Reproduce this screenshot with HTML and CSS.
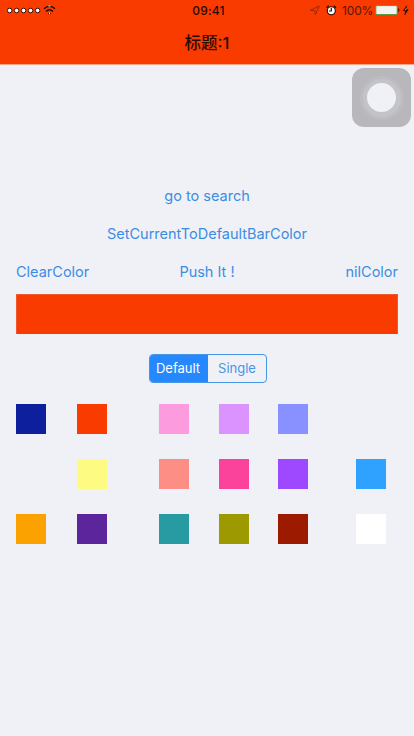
FILE: index.html
```html
<!DOCTYPE html>
<html lang="zh-CN">
<head>
<meta charset="utf-8">
<title>标题:1</title>
<link rel="stylesheet" href="styles.css">
</head>
<body>
<header class="navbar">
  <div class="status">
    <div class="status-left">
      <svg class="signal" width="50" height="14" viewBox="0 0 50 14">
        <g fill="#fff" stroke="#321006" stroke-width="1">
          <circle cx="3.6" cy="7.5" r="2.3"/><circle cx="10.6" cy="7.5" r="2.3"/><circle cx="17.6" cy="7.5" r="2.3"/><circle cx="24.6" cy="7.5" r="2.3"/><circle cx="31.6" cy="7.5" r="2.3"/>
        </g>
        <g fill="none" stroke="#210a04" stroke-width="1.4">
          <path d="M38 5.8Q43.5 .7 49 5.8"/><path d="M40 8.6Q43.5 5 47 8.6"/>
        </g>
        <path d="M41.8 10.2Q43.5 8.8 45.2 10.2L43.5 12Z" fill="#210a04"/>
        <path d="M42.5 3h2M43.5 9.5v1.8" stroke="#fff" stroke-width="1"/>
      </svg>
    </div>
    <time class="clock">09:41</time>
    <div class="status-right">
      <svg width="12" height="14" viewBox="0 0 12 14"><path d="M1.4 7.3L10.2 3L6.3 11.7L5.8 7.6Z" fill="none" stroke="#9c2908" stroke-width="1"/></svg>
      <svg class="alarm" width="12" height="14" viewBox="0 0 12 14"><circle cx="6.3" cy="7.8" r="4" fill="#fff" stroke="#210a04" stroke-width="1.1"/><path d="M1.6 4.8L3.7 2.8M8.9 2.8L11 4.8M6.3 5v3H4" fill="none" stroke="#210a04" stroke-width="1.2"/></svg>
      <span class="percent">100%</span>
      <svg width="36" height="14" viewBox="0 0 36 14"><rect x=".8" y="2.6" width="21.4" height="9" rx="1.4" fill="#f5f2f4" stroke="#4c9b38"/><path d="M23.4 5.6q1.5 1.5 0 3z" fill="#38160b" stroke="#38160b" stroke-width=".6"/><path d="M31.7 2.7L28.2 7.8H30.5L29.7 12L33.3 6.5H31Z" fill="#210a04" stroke="#210a04" stroke-width=".4"/><path d="M31 5.5L30.5 7.2" stroke="#fff" stroke-width=".7"/></svg>
    </div>
  </div>
  <h1 class="title">标题:1</h1>
</header>
<main class="content">
  <div class="links">
    <a class="link search">go to search</a>
    <a class="link set-default">SetCurrentToDefaultBarColor</a>
    <div class="link-row">
      <a class="link clear">ClearColor</a>
      <a class="link push">Push It !</a>
      <a class="link nil">nilColor</a>
    </div>
  </div>
  <div class="preview"></div>
  <div class="segments">
    <div class="segment selected">Default</div>
    <div class="segment">Single</div>
  </div>
  <div class="palette">
    <i class="swatch navy"></i><i class="swatch red"></i><i class="swatch pink"></i><i class="swatch lilac"></i><i class="swatch periwinkle"></i><i class="swatch clear-swatch"></i>
    <i class="swatch clear-swatch"></i><i class="swatch yellow"></i><i class="swatch salmon"></i><i class="swatch magenta"></i><i class="swatch violet"></i><i class="swatch blue"></i>
    <i class="swatch orange"></i><i class="swatch purple"></i><i class="swatch teal"></i><i class="swatch olive"></i><i class="swatch brick"></i><i class="swatch white"></i>
  </div>
</main>
<div class="assistive"><div class="ring"><div class="knob"></div></div></div>
</body>
</html>
```

FILE: styles.css
```css
* { box-sizing: border-box; }
body {
  margin: 0;
  width: 414px;
  height: 736px;
  overflow: hidden;
  background: #f0f1f7;
  font-family: Inter, "Noto Sans CJK SC", sans-serif;
}
.navbar {
  height: 65px;
  background: #fa3b00;
  border-bottom: 1px solid #f9a58c;
  color: #260c04;
}
.status {
  display: grid;
  grid-template-columns: 1fr auto 1fr;
  height: 22px;
  padding: 3px 3px 0 6px;
}
.status svg { display: block; flex: none; }
.clock {
  font-size: 12px;
  line-height: 16px;
  font-weight: 500;
  letter-spacing: .2px;
}
.status-right { display: flex; justify-content: flex-end; }
.alarm { margin-left: 4px; }
.percent {
  width: 31px;
  margin: 0 2px 0 5px;
  font-size: 12px;
  line-height: 16px;
  letter-spacing: -.15px;
  color: #571706;
}
.title {
  margin: 0;
  font-size: 16.5px;
  line-height: 43px;
  font-weight: 500;
  text-align: center;
}
.content { padding: 120px 16px 0; }
.links { display: flex; flex-direction: column; align-items: center; gap: 16px; }
.link {
  font-size: 14.5px;
  line-height: 21px;
  height: 22px;
  color: #3b8de3;
  white-space: nowrap;
}
.link-row {
  display: grid;
  grid-template-columns: 1fr auto 1fr;
  align-self: stretch;
}
.nil { text-align: right; }
.preview {
  height: 40px;
  margin-top: 11px;
  background: #fa3b00;
  border: 1px solid #ee5931;
  border-bottom: 0;
}
.segments {
  display: grid;
  grid-template-columns: 1fr 1fr;
  width: 118px;
  height: 29px;
  margin: 20px auto 0 133px;
  border: 1px solid #4795e5;
  border-radius: 4px;
  overflow: hidden;
}
.segment {
  font-size: 13px;
  line-height: 27px;
  text-align: center;
  color: #4795e5;
}
.selected { background: #2688fe; color: #fff; padding-right: 2px; }
.palette {
  display: grid;
  grid-template-columns: 61px 82px 60px 59px 78px 30px;
  row-gap: 25px;
  margin-top: 21px;
}
.swatch { width: 30px; height: 30px; }
.navy { background: #0d1f9c; }
.red { background: #fa3b00; }
.pink { background: #fc9bdd; }
.lilac { background: #da93ff; }
.periwinkle { background: #8990ff; }
.yellow { background: #fefb83; }
.salmon { background: #fc8e85; }
.magenta { background: #fb439b; }
.violet { background: #9e49ff; }
.blue { background: #2fa1ff; }
.orange { background: #fba100; }
.purple { background: #5c259c; }
.teal { background: #279ba1; }
.olive { background: #9c9a00; }
.brick { background: #9c1a00; }
.white { background: #fff; }
.clear-swatch { background: transparent; }
.assistive {
  position: absolute;
  left: 352px;
  top: 68px;
  width: 59px;
  height: 59px;
  display: grid;
  place-items: center;
  border-radius: 12px;
  background: #b8b7bc;
}
.ring {
  width: 44px;
  height: 44px;
  display: grid;
  place-items: center;
  border-radius: 50%;
  border: 3px solid #bdbcc1;
  background: #c4c3c8;
}
.knob { width: 29px; height: 29px; border-radius: 50%; background: #f0f1f7; }
```
